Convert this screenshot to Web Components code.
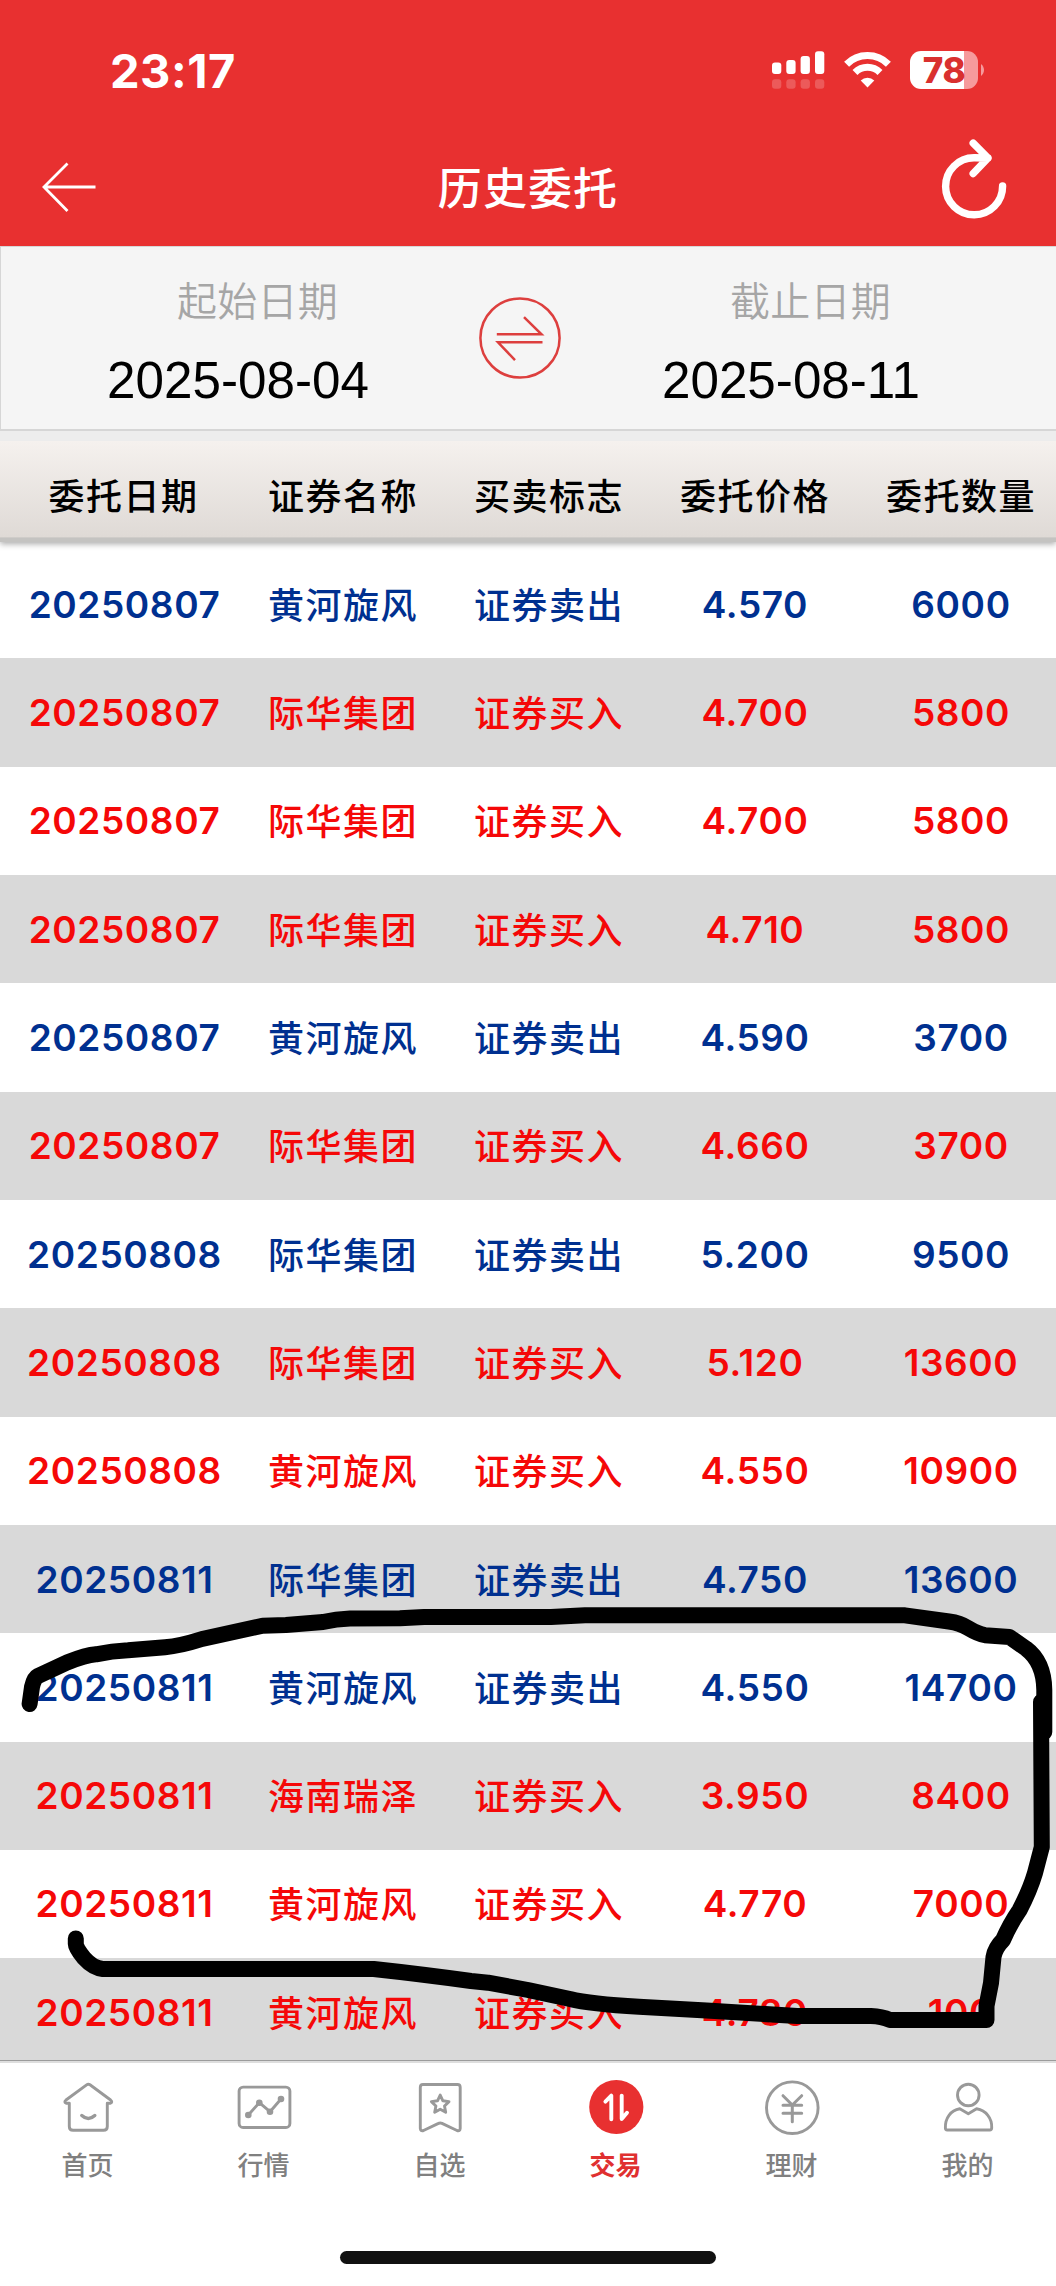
<!DOCTYPE html>
<html lang="zh-CN">
<head>
<meta charset="utf-8">
<meta name="viewport" content="width=1056">
<title>历史委托</title>
<style>
  html, body {
    margin: 0;
    width: 1056px;
    height: 2286px;
    overflow: hidden;
    background: #fff;
    font-family: Inter, "Noto Sans CJK SC", sans-serif;
  }
</style>
</head>
<body>
<trade-app></trade-app>

<script>
const define = (name, html, setup) => {
  const template = document.createElement('template');
  template.innerHTML = html;
  customElements.define(name, class extends HTMLElement {
    constructor() {
      super();
      this.attachShadow({ mode: 'open' }).appendChild(template.content.cloneNode(true));
    }

    connectedCallback() {
      if (setup) setup(this, this.shadowRoot);
    }
  });
};

define('status-bar', `
  <style>
    :host {
      display: flex;
      justify-content: space-between;
      align-items: center;
      height: 140px;
      padding: 0 71px 0 110px;
      box-sizing: border-box;
      color: #fff;
    }
    .time {
      font-size: 47px;
      font-weight: 700;
      letter-spacing: 0.5px;
    }
    .icons {
      display: flex;
      align-items: center;
    }
    .wifi {
      margin: 0 19px 0 18px;
    }
    .battery {
      display: flex;
      align-items: center;
      justify-content: center;
      width: 68px;
      height: 38px;
      border-radius: 11px;
      background: linear-gradient(90deg, #fff 54px, #f69a9c 54px);
      color: #d9302f;
      font-size: 35px;
      font-weight: 800;
      letter-spacing: -0.3px;
    }
    .nub {
      margin-left: 3px;
    }
  </style>
  <span class="time">23:17</span>
  <div class="icons">
    <svg width="54" height="38" fill="#fff">
      <rect x="0" y="11.5" width="9.3" height="11.5" rx="3"/>
      <rect x="14.3" y="9" width="9.3" height="14" rx="3"/>
      <rect x="28.6" y="5" width="9.3" height="18" rx="3"/>
      <rect x="43" y="0.3" width="9.3" height="22.7" rx="3"/>
      <g opacity=".2">
        <rect x="0" y="28.3" width="9.3" height="9.5" rx="3"/>
        <rect x="14.3" y="28.3" width="9.3" height="9.5" rx="3"/>
        <rect x="28.6" y="28.3" width="9.3" height="9.5" rx="3"/>
        <rect x="43" y="28.3" width="9.3" height="9.5" rx="3"/>
      </g>
    </svg>
    <svg class="wifi" width="47" height="36" fill="none" stroke="#fff" stroke-width="7">
      <path d="M2.6 12.2 A29.5 29.5 0 0 1 44.4 12.2"/>
      <path d="M11 20.4 A17.8 17.8 0 0 1 36 20.4"/>
      <path d="M23.5 35.5 L16.7 28.6 A9.7 9.7 0 0 1 30.3 28.6 Z" fill="#fff" stroke="none"/>
    </svg>
    <div class="battery">78</div>
    <svg class="nub" width="4" height="12"><path d="M0 0 A7.5 7.5 0 0 1 0 12 Z" fill="#f69a9c"/></svg>
  </div>
`);

define('nav-bar', `
  <style>
    :host {
      display: flex;
      align-items: center;
      justify-content: space-between;
      height: 106px;
      padding: 0 47px 0 39px;
      box-sizing: border-box;
      color: #fff;
    }
    h1 {
      margin: -8px 0 0 8px;
      font-size: 44px;
      line-height: 60px;
      font-weight: 500;
      letter-spacing: 1.1px;
    }
    svg {
      display: block;
      overflow: visible;
    }
    .side {
      width: 70px;
    }
  </style>
  <div class="side">
    <svg width="60" height="60" viewBox="40 163 60 60" fill="none" stroke="#fff" stroke-width="2.8">
      <path d="M68.5 163.5 L45 187 L68.5 211 M45 187 H96.5"/>
    </svg>
  </div>
  <h1><slot></slot></h1>
  <div class="side">
    <svg width="70" height="90" viewBox="939 148 70 90" fill="none" stroke="#fff" stroke-width="7.4" stroke-linecap="round" stroke-linejoin="round">
      <path d="M1002.6 186 A28.5 28.5 0 1 1 974 157.8 L988 158 M973.2 143.2 L988 158 L973.2 173.5"/>
    </svg>
  </div>
`);

define('date-field', `
  <style>
    :host {
      display: flex;
      flex-direction: column;
      align-items: center;
      width: 300px;
    }
    .label {
      font-size: 40px;
      line-height: 60px;
      font-weight: 350;
      color: #a6a6a6;
      letter-spacing: 0.3px;
      padding-left: 39px;
    }
    .value {
      margin-top: 19px;
      font: 51.2px/60px "Liberation Sans", sans-serif;
      color: #000;
    }
  </style>
  <span class="label"></span>
  <span class="value"><slot></slot></span>
`, (host, root) => {
  root.querySelector('.label').textContent = host.getAttribute('label');
});

define('date-range', `
  <style>
    :host {
      display: flex;
      justify-content: space-between;
      height: 185px;
      padding: 25px 115px 0 87px;
      box-sizing: border-box;
      border: solid #d6d6d6;
      border-width: 1px 0 2px 1px;
      background: #f5f5f5;
    }
    svg {
      margin: 24px 0 0 10px;
    }
  </style>
  <date-field label="起始日期">2025-08-04</date-field>
  <svg width="84" height="84" viewBox="477.5 296.4 84 84" fill="none" stroke="#dd3f3e" stroke-width="2.5">
    <circle cx="519.5" cy="338.4" r="39.6"/>
    <path d="M496.3 334.7 H541 L523.5 317.5 M542 342.7 H497.5 L514.5 360.5"/>
  </svg>
  <date-field label="截止日期">2025-08-11</date-field>
`);

// Columns are wider than the screen; the last one runs off the right edge.
const columns = 'grid-template-columns: 233px repeat(4, 206px); padding-left: 7px;';

define('table-head', `
  <style>
    :host {
      display: grid;
      ${columns}
      align-items: center;
      position: relative;
      height: 87px;
      padding-top: 9px;
      margin-top: 10px;
      border-bottom: 1px solid #cfccc9;
      background: linear-gradient(#f5f1ee, #dfdad6);
      box-shadow: 0 4px 0 #c4c3c1, 0 6px 6px #aaa;
      font-size: 36px;
      font-weight: 500;
      letter-spacing: 1.5px;
      text-align: center;
      color: #000;
    }
  </style>
  <span>委托日期</span><span>证券名称</span><span>买卖标志</span><span>委托价格</span><span>委托数量</span>
`);

define('order-row', `
  <style>
    :host {
      display: grid;
      ${columns}
      align-items: center;
      height: 108.34px;
      flex: none;
      font-size: 37px;
      font-weight: 600;
      letter-spacing: 0.6px;
      text-align: center;
      color: #f50808;
    }
    :host([side="sell"]) {
      color: #003090;
    }
    :host(:nth-of-type(even)) {
      background: #d9d9d9;
    }
    .date {
      padding-left: 2px;
    }
    .cjk {
      font-size: 36px;
      font-weight: 500;
      letter-spacing: 1.5px;
      padding-bottom: 3px;
    }
  </style>
  <span class="date"></span>
  <span class="cjk name"></span>
  <span class="cjk flag"></span>
  <span class="price"></span>
  <span class="amount"></span>
`, (host, root) => {
  for (const key of ['date', 'name', 'price', 'amount']) {
    root.querySelector('.' + key).textContent = host.getAttribute(key);
  }
  root.querySelector('.flag').textContent = host.getAttribute('side') === 'sell' ? '证券卖出' : '证券买入';
});

const orders = [
  ['20250807', '黄河旋风', 'sell', '4.570', '6000'],
  ['20250807', '际华集团', 'buy', '4.700', '5800'],
  ['20250807', '际华集团', 'buy', '4.700', '5800'],
  ['20250807', '际华集团', 'buy', '4.710', '5800'],
  ['20250807', '黄河旋风', 'sell', '4.590', '3700'],
  ['20250807', '际华集团', 'buy', '4.660', '3700'],
  ['20250808', '际华集团', 'sell', '5.200', '9500'],
  ['20250808', '际华集团', 'buy', '5.120', '13600'],
  ['20250808', '黄河旋风', 'buy', '4.550', '10900'],
  ['20250811', '际华集团', 'sell', '4.750', '13600'],
  ['20250811', '黄河旋风', 'sell', '4.550', '14700'],
  ['20250811', '海南瑞泽', 'buy', '3.950', '8400'],
  ['20250811', '黄河旋风', 'buy', '4.770', '7000'],
  ['20250811', '黄河旋风', 'buy', '4.780', '100']
];

define('order-list', `
  <style>
    :host {
      display: flex;
      flex-direction: column;
      height: 1523px;
      overflow: hidden;
      padding-top: 11.9px;
      box-sizing: border-box;
    }
  </style>
`, (host, root) => {
  for (const [date, name, side, price, amount] of orders) {
    const row = document.createElement('order-row');
    Object.entries({ date, name, side, price, amount }).forEach(([k, v]) => row.setAttribute(k, v));
    root.appendChild(row);
  }
});

const tabIcons = {
  home: `<path d="M11.3 25.3 H8.2 Q5.6 24 8 22 L28.6 6.8 Q30.3 5.6 32 6.8 L52.6 22 Q55 24 52.4 25.3 H49.3 V48.5 Q49.3 52.3 45.5 52.3 H15.1 Q11.3 52.3 11.3 48.5 Z"/>
    <path d="M23.8 37.5 Q30.3 43.5 36.8 37.5" stroke-width="3.4"/>`,
  chart: `<rect x="5.1" y="9.1" width="50.8" height="40.4" rx="4"/>
    <path d="M14.3 37 L25.3 24.7 L36 33.7 L47 21"/>
    <g fill="currentColor" stroke="none"><circle cx="14.3" cy="37" r="3.3"/><circle cx="25.3" cy="24.7" r="3.3"/><circle cx="36" cy="33.7" r="3.3"/><circle cx="47" cy="21" r="3.3"/></g>`,
  mark: `<path d="M10.3 9.3 Q10.3 6.5 13 6.5 H47.5 Q50.2 6.5 50.2 9.3 V50.5 Q50 53.5 47 52.5 L32 45.4 Q30.2 44.5 28.5 45.4 L13.5 52.5 Q10.5 53.5 10.3 50.5 Z"/>
    <path d="M30.2 17 L32.9 22.8 L39 23.6 L34.5 28 L35.7 34.3 L30.2 31.2 L24.7 34.3 L25.9 28 L21.4 23.6 L27.5 22.8 Z"/>`,
  trade: `<circle cx="30.3" cy="29" r="27.1" fill="#e83030" stroke="none"/>
    <path d="M19.4 23.6 L25.3 17.6 V41.3 M35.7 17.6 V41 L41 34.8" stroke="#fff" stroke-width="3.9"/>`,
  yen: `<circle cx="30.3" cy="29.7" r="25.8"/>
    <path d="M21 17.7 L30.3 27 L39.7 17.7 M21 27.2 H39.7 M21 35.3 H39.7 M30.3 27 V43.7" stroke-width="3"/>`,
  person: `<circle cx="30.3" cy="17" r="10.8"/>
    <path d="M21.8 30.8 L30.3 35.7 L38.6 30.8 C48 32.5 54.2 40 53.7 50 Q53.6 52 51.8 52 H9.2 Q7.4 52 7.4 50 C7 40 12.6 32.5 21.8 30.8 Z"/>`
};

define('tab-item', `
  <style>
    :host {
      display: flex;
      flex: 1;
      flex-direction: column;
      align-items: center;
      color: #808080;
      font-size: 26px;
      line-height: 40px;
      font-weight: 500;
    }
    :host([active]) {
      color: #e03030;
      font-weight: 700;
    }
    svg {
      color: #999;
      margin-bottom: 8px;
    }
    span {
      margin-right: 1px;
    }
  </style>
  <svg width="60" height="60" fill="none" stroke="currentColor" stroke-width="2.9" stroke-linecap="round" stroke-linejoin="round"></svg>
  <span><slot></slot></span>
`, (host, root) => {
  root.querySelector('svg').innerHTML = tabIcons[host.getAttribute('icon')];
});

define('tab-bar', `
  <style>
    :host {
      display: flex;
      flex-direction: column;
      height: 226px;
      box-sizing: border-box;
      border-top: 1px solid #9c9c9c;
      background: #fff;
      box-shadow: inset 0 2px 0 #dedede;
    }
    .tabs {
      display: flex;
      padding-top: 17px;
    }
    .indicator {
      width: 376px;
      height: 13px;
      margin: 65px auto 0;
      border-radius: 7px;
      background: #111;
    }
  </style>
  <div class="tabs">
    <tab-item icon="home">首页</tab-item>
    <tab-item icon="chart">行情</tab-item>
    <tab-item icon="mark">自选</tab-item>
    <tab-item icon="trade" active>交易</tab-item>
    <tab-item icon="yen">理财</tab-item>
    <tab-item icon="person">我的</tab-item>
  </div>
  <div class="indicator"></div>
`);

// Freehand pen marks drawn over the page
define('pen-layer', `
  <style>
    :host {
      position: absolute;
      inset: 0;
      pointer-events: none;
    }
  </style>
  <svg width="1056" height="2286" fill="none" stroke="#000" stroke-width="16" stroke-linecap="round" stroke-linejoin="round">
    <path d="M29.6 1704 L32 1687 Q34 1678 38 1676 L67 1662.5 Q86 1655 96 1654.3 Q112 1651 128 1650.3 L165 1647.3 Q180 1646 202 1639 L262.6 1625.7 L286 1625 L323 1622 Q336 1619 350 1618.5 L400 1618.3 L424 1617 H551 L585 1615.3 H905 L949 1621.5 Q960 1623 968 1628 Q978 1634 985 1635.2 L1009.5 1637 L1026 1648.5 Q1044 1662 1044.3 1690 V1732"/>
    <path d="M1041 1702 L1041.8 1847 L1035 1873 Q1030 1890 1019.6 1910 Q1010 1924 1003 1940 Q995 1948 993.5 1957 L991 1983 L986.5 2006 V2020 H890 Q882 2016.5 871 2016 H797 L706.5 2010.5 L639 2006.7 Q590 2004 570 1999 L528 1990 L488 1982.7 L471 1981 Q420 1974 373.7 1969 H102.7 Q93 1968 84 1958 Q75.8 1948 75.8 1944 V1938.5"/>
  </svg>
`);

define('trade-app', `
  <style>
    :host {
      display: flex;
      flex-direction: column;
      position: relative;
      width: 1056px;
      height: 2286px;
      overflow: hidden;
      background: #fff;
    }
    header {
      height: 246px;
      flex: none;
      background: #e83030;
    }
    .filter {
      flex: none;
      background: #ededed;
    }
  </style>
  <header>
    <status-bar></status-bar>
    <nav-bar>历史委托</nav-bar>
  </header>
  <div class="filter">
    <date-range></date-range>
    <table-head></table-head>
  </div>
  <order-list></order-list>
  <tab-bar></tab-bar>
  <pen-layer></pen-layer>
`);
</script>
</body>
</html>
